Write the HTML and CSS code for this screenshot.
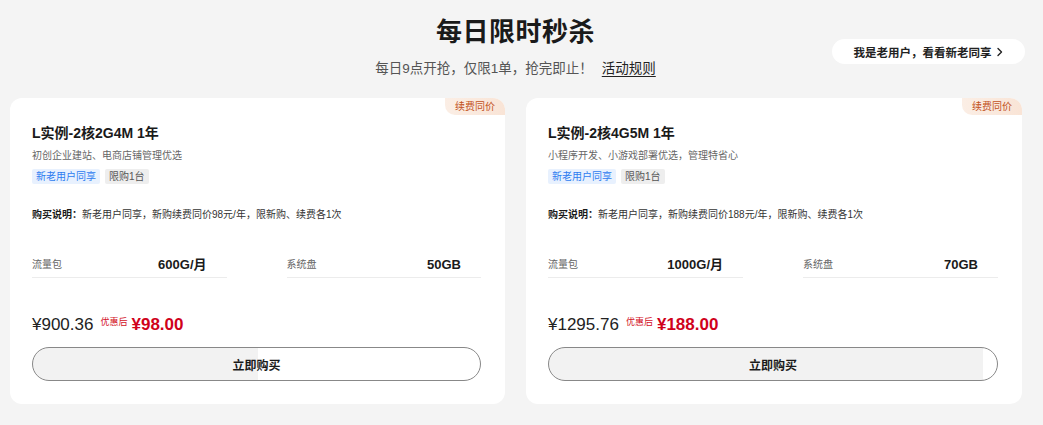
FILE: index.html
```html
<!DOCTYPE html>
<html lang="zh-CN">
<head>
<meta charset="utf-8">
<link rel="stylesheet" href="styles.css">
</head>
<body>
<div class="page">
  <header class="header">
    <div class="side"></div>
    <div class="heading">
      <h1 class="title">每日限时秒杀</h1>
      <p class="subtitle">每日9点开抢，仅限1单，抢完即止！<a class="rules">活动规则</a></p>
    </div>
    <div class="side side-right">
      <a class="pill">我是老用户，看看新老同享<svg class="chev" viewBox="0 0 8 10" width="8" height="10"><path d="M2 1.5 L5.5 5 L2 8.5" fill="none" stroke="#222" stroke-width="1.4" stroke-linecap="round" stroke-linejoin="round"/></svg></a>
    </div>
  </header>

  <main class="cards">
    <section class="card">
      <span class="badge">续费同价</span>
      <h2 class="card-title">L实例-2核2G4M 1年</h2>
      <p class="desc">初创企业建站、电商店铺管理优选</p>
      <div class="tags"><span class="tag tag-blue">新老用户同享</span><span class="tag tag-gray">限购1台</span></div>
      <p class="note"><b>购买说明：</b>新老用户同享，新购续费同价98元/年，限新购、续费各1次</p>
      <div class="specs">
        <div class="spec"><span class="spec-label">流量包</span><span class="spec-value">600G/月</span></div>
        <div class="spec"><span class="spec-label">系统盘</span><span class="spec-value">50GB</span></div>
      </div>
      <div class="price"><span class="orig">¥900.36</span><span class="after">优惠后</span><span class="now">¥98.00</span></div>
      <button class="buy" style="--fill:50.3%">立即购买</button>
    </section>

    <section class="card">
      <span class="badge">续费同价</span>
      <h2 class="card-title">L实例-2核4G5M 1年</h2>
      <p class="desc">小程序开发、小游戏部署优选，管理特省心</p>
      <div class="tags"><span class="tag tag-blue">新老用户同享</span><span class="tag tag-gray">限购1台</span></div>
      <p class="note"><b>购买说明：</b>新老用户同享，新购续费同价188元/年，限新购、续费各1次</p>
      <div class="specs">
        <div class="spec"><span class="spec-label">流量包</span><span class="spec-value">1000G/月</span></div>
        <div class="spec"><span class="spec-label">系统盘</span><span class="spec-value">70GB</span></div>
      </div>
      <div class="price"><span class="orig">¥1295.76</span><span class="after">优惠后</span><span class="now">¥188.00</span></div>
      <button class="buy" style="--fill:96.9%">立即购买</button>
    </section>
  </main>
</div>
</body>
</html>
```

FILE: styles.css
```css
* { box-sizing: border-box; }
html, body {
  margin: 0;
  padding: 0;
  background: #f4f4f4;
  font-family: "Liberation Sans", "Noto Sans CJK SC", sans-serif;
  color: #222;
}
.page {
  width: 1043px;
  height: 425px;
  overflow: hidden;
}
.header {
  display: grid;
  grid-template-columns: 1fr auto 1fr;
  padding: 12px 12px 0 0;
}
.heading { text-align: center; }
.title {
  margin: 0;
  font-size: 26px;
  line-height: 40px;
  font-weight: 700;
  color: #1a1a1a;
  letter-spacing: 0.5px;
}
.subtitle {
  margin: 7px 0 0;
  font-size: 13.5px;
  line-height: 20px;
  color: #555;
}
.rules {
  margin-left: 9px;
  color: #222;
  text-decoration: underline;
  text-underline-offset: 3px;
}
.side-right {
  display: flex;
  justify-content: flex-end;
  align-items: flex-start;
  padding-right: 6px;
}
.pill {
  margin-top: 27px;
  display: flex;
  align-items: center;
  justify-content: center;
  gap: 4px;
  width: 193px;
  height: 25px;
  border-radius: 13px;
  background: #fff;
  font-size: 11.5px;
  font-weight: 600;
  color: #222;
}
.chev { display: block; margin-top: 1px; }

.cards {
  display: grid;
  grid-template-columns: 495px 496px;
  gap: 21px;
  padding-left: 10px;
  margin-top: 19px;
}
.card {
  position: relative;
  background: #fff;
  border-radius: 12px;
  padding: 26px 24px 0 22px;
  height: 306px;
}
.badge {
  position: absolute;
  top: 0;
  right: 0;
  width: 60px;
  height: 17px;
  line-height: 17px;
  text-align: center;
  font-size: 10px;
  color: #c2521d;
  background: linear-gradient(90deg, #fbeee5, #f9e4d6);
  border-radius: 0 12px 0 10px;
}
.card-title {
  margin: 0;
  font-size: 14px;
  line-height: 18px;
  font-weight: 700;
  color: #1a1a1a;
}
.desc {
  margin: 7px 0 0;
  font-size: 10px;
  line-height: 14px;
  color: #666;
}
.tags {
  display: flex;
  gap: 5px;
  margin-top: 6px;
}
.tag {
  height: 15px;
  line-height: 15px;
  padding: 0 2px;
  font-size: 10px;
  border-radius: 2px;
}
.tag-blue { background: #e8f1fe; color: #2d7cf0; padding: 0 4px; }
.tag-gray { background: #eeeeee; color: #555; padding: 0 4px; }
.note {
  margin: 24px 0 0;
  font-size: 10px;
  line-height: 14px;
  color: #333;
}
.note b { color: #1a1a1a; font-weight: 700; }
.specs {
  display: grid;
  grid-template-columns: 1fr 1fr;
  gap: 60px;
  margin-top: 35px;
}
.spec {
  display: flex;
  justify-content: space-between;
  align-items: center;
  padding: 0 20px 4px 0;
  line-height: 16px;
  border-bottom: 1px solid #ececec;
}
.spec-label { font-size: 10px; color: #666; }
.spec-value { font-size: 13px; font-weight: 700; color: #1a1a1a; }
.price {
  display: flex;
  align-items: flex-start;
  margin-top: 35px;
  height: 24px;
  line-height: 24px;
}
.orig { font-size: 17px; color: #222; }
.after {
  font-size: 9px;
  line-height: 12px;
  color: #d3101e;
  margin: 3px 4px 0 7px;
}
.now { font-size: 17px; font-weight: 700; color: #d0021b; }
.buy {
  display: block;
  width: 100%;
  height: 34px;
  margin-top: 10px;
  border: 1px solid #888;
  border-radius: 17px;
  background: linear-gradient(90deg, #f2f2f2 var(--fill), #fff var(--fill));
  font-family: inherit;
  font-size: 12px;
  font-weight: 700;
  color: #1a1a1a;
  padding: 0;
}
```
